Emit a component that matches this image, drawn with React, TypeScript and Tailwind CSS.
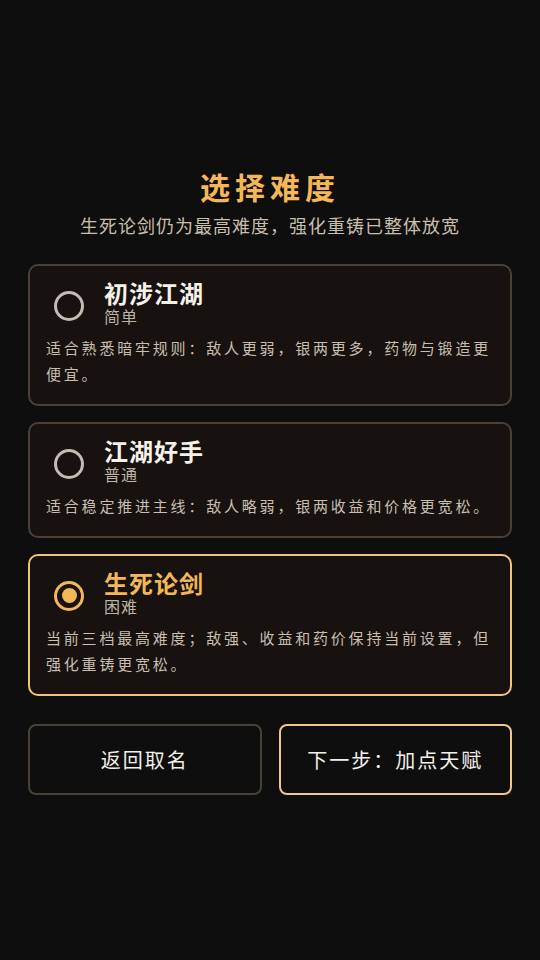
const levels = [
  {
    id: "easy",
    title: "初涉江湖",
    tag: "简单",
    desc: "适合熟悉暗牢规则：敌人更弱，银两更多，药物与锻造更便宜。",
  },
  {
    id: "normal",
    title: "江湖好手",
    tag: "普通",
    desc: "适合稳定推进主线：敌人略弱，银两收益和价格更宽松。",
  },
  {
    id: "hard",
    title: "生死论剑",
    tag: "困难",
    desc: "当前三档最高难度；敌强、收益和药价保持当前设置，但强化重铸更宽松。",
  },
];

function Radio({ on }: { on: boolean }) {
  return (
    <div
      className={`ml-2 mt-[5px] flex h-[30px] w-[30px] shrink-0 items-center justify-center rounded-full border-[3px] ${
        on ? "border-[#f4b757]" : "border-[#c4bbb1]"
      }`}
    >
      {on && <div className="h-[15px] w-[15px] rounded-full bg-[#f4b757]" />}
    </div>
  );
}

export default function App() {
  const selected = "hard";

  return (
    <div
      className="min-h-[960px] w-[540px] bg-[#0e0e0e] px-7 pt-[166px]"
      style={{ fontFamily: '"Noto Sans CJK SC", "Noto Sans", sans-serif' }}
    >
      <h1 className="text-center text-[30px] font-bold leading-[40px] tracking-[5px] text-[#f4b757]">
        选择难度
      </h1>
      <p className="mt-[6px] text-center text-[18px] leading-[26px] tracking-[1px] text-[#c9bfae]">
        生死论剑仍为最高难度，强化重铸已整体放宽
      </p>

      <div className="mt-[26px] flex flex-col gap-[16px]">
        {levels.map((l) => {
          const on = l.id === selected;
          return (
            <div
              key={l.id}
              className={`rounded-[10px] border-2 bg-[#17120f] px-4 pb-[17px] pt-[13px] ${
                on ? "border-[#f2c27f]" : "border-[#4a4036]"
              }`}
            >
              <div className="flex items-center gap-5">
                <Radio on={on} />
                <div className="flex flex-col">
                  <span
                    className={`text-[24px] font-bold leading-[27px] tracking-[1px] ${
                      on ? "text-[#f4b757]" : "text-[#f5f1ea]"
                    }`}
                  >
                    {l.title}
                  </span>
                  <span className="text-[16px] leading-[21px] tracking-[1px] text-[#bdb3a6]">
                    {l.tag}
                  </span>
                </div>
              </div>
              <p className="mt-2 text-[15px] leading-[26px] tracking-[2.8px] text-[#c8bfb2]">
                {l.desc}
              </p>
            </div>
          );
        })}
      </div>

      <div className="mt-[28px] grid grid-cols-2 gap-[17px]">
        <button className="h-[71px] rounded-[8px] border-2 border-[#4a4036] bg-[#0e0e0e] text-[20px] tracking-[2px] text-[#f3efe9]">
          返回取名
        </button>
        <button className="h-[71px] rounded-[8px] border-2 border-[#f2c68c] bg-[#0e0e0e] text-[20px] tracking-[2px] text-[#f3efe9]">
          下一步：加点天赋
        </button>
      </div>
    </div>
  );
}
